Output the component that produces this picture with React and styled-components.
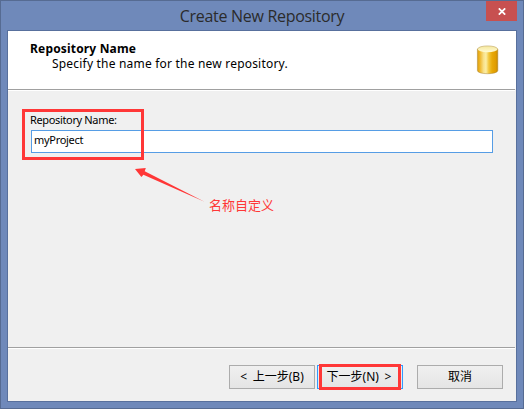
import React from 'react';
import styled, { createGlobalStyle } from 'styled-components';

const Global = createGlobalStyle`
  * { box-sizing: border-box; }
  body { margin: 0; overflow: hidden; }
`;

const Window = styled.div`
  position: relative;
  width: 524px;
  height: 409px;
  padding: 0 6px 6px;
  display: flex;
  flex-direction: column;
  background: #6f89ba;
  border: 1px solid #566b92;
  color: #000;
  font-family: 'Noto Sans', 'Noto Sans CJK SC', sans-serif;
`;

const TitleBar = styled.header`
  height: 29px;
  flex: none;
  display: grid;
  grid-template-columns: 31px 1fr 31px;
`;

const Title = styled.h1`
  grid-column: 2;
  margin: 0;
  padding-top: 1px;
  text-align: center;
  font: 400 16px/28px 'Open Sans', sans-serif;
  letter-spacing: -0.3px;
  color: #2b2b2b;
  white-space: nowrap;
`;

const CloseButton = styled.button`
  width: 31px;
  height: 20px;
  padding: 0;
  border: 0;
  background: #c75050;
  display: flex;
  align-items: center;
  justify-content: center;
`;

const Client = styled.main`
  flex: 1;
  display: flex;
  flex-direction: column;
  border: 1px solid #58709d;
  background: #f0f0f0;
`;

const Banner = styled.section`
  height: 58px;
  flex: none;
  padding: 10px 17px 0 22px;
  display: flex;
  justify-content: space-between;
  background: #fff;
`;

const BannerTitle = styled.h2`
  margin: 0;
  font-size: 12px;
  font-weight: 700;
  line-height: 15px;
  letter-spacing: 0.17px;
`;

const BannerText = styled.p`
  margin: 0 0 0 22px;
  font-size: 12px;
  line-height: 16px;
  letter-spacing: 0.2px;
`;

const Divider = styled.div`
  height: 2px;
  flex: none;
  margin-right: 1px;
  border-top: 1px solid #a0a0a0;
  background: #fff;
`;

const Form = styled.section`
  flex: 1;
  padding: 22px 23px 0 23px;
  display: flex;
  flex-direction: column;
`;

const Label = styled.label`
  margin-left: -1px;
  height: 17px;
  font-size: 11px;
  line-height: 14px;
  letter-spacing: -0.35px;
`;

const Field = styled.div`
  height: 23px;
  padding: 0 2px;
  border: 1px solid #569de5;
  background: #fff;
  font-size: 11px;
  line-height: 18px;
  letter-spacing: -0.3px;
`;

const Footer = styled.footer`
  height: 52px;
  flex: none;
  padding: 16px 13px 0 0;
  display: flex;
  justify-content: flex-end;
  gap: 2px;
`;

const Button = styled.button`
  width: 86px;
  height: 24px;
  padding: 0;
  margin-left: ${(p) => (p.$separate ? '12px' : '0')};
  border: 1px solid ${(p) => (p.$primary ? '#3399ff' : '#acacac')};
  background: linear-gradient(#f0f0f0, #e5e5e5);
  color: #000;
  font: 12px/22px 'Noto Sans', 'Noto Sans CJK SC', sans-serif;
  word-spacing: 2.5px;
  text-indent: ${(p) => (p.$primary ? '-2px' : '0')};
  white-space: nowrap;
`;

const Highlight = styled.div`
  position: absolute;
  left: ${(p) => p.$x - 1}px;
  top: ${(p) => p.$y - 1}px;
  width: ${(p) => p.$w}px;
  height: ${(p) => p.$h}px;
  border: 3px solid #ff3737;
`;

const Arrow = styled.svg`
  position: absolute;
  left: 133px;
  top: 165px;
`;

const Note = styled.div`
  position: absolute;
  left: 208px;
  top: 195px;
  color: #ff3737;
  font: 400 13px/18px 'Noto Sans CJK SC', sans-serif;
  white-space: nowrap;
`;

const IconSlot = styled.div`
  width: 23px;
  height: 30px;
  margin-top: 4px;
`;

function Cylinder() {
  return (
    <svg width="23" height="30" viewBox="0 0 23 30">
      <defs>
        <linearGradient id="body" x1="0" x2="1">
          <stop offset="0" stopColor="#dc9f08" />
          <stop offset="0.12" stopColor="#efb62a" />
          <stop offset="0.3" stopColor="#f8e088" />
          <stop offset="0.42" stopColor="#fbeea6" />
          <stop offset="0.56" stopColor="#f2c63c" />
          <stop offset="0.72" stopColor="#e8a908" />
          <stop offset="0.9" stopColor="#e09c00" />
          <stop offset="1" stopColor="#c48600" />
        </linearGradient>
        <linearGradient id="lid" x1="0" x2="0" y1="0" y2="1">
          <stop offset="0" stopColor="#f5e79c" />
          <stop offset="1" stopColor="#fffbd5" />
        </linearGradient>
      </defs>
      <path d="M1.4 4V25.5C1.4 29.8 21.8 29.8 21.8 25.5V4Z" fill="url(#body)" stroke="#a8863f" strokeWidth="0.5" />
      <ellipse cx="11.6" cy="4.1" rx="10" ry="3.2" fill="url(#lid)" />
      <path d="M1.6 4C2.5 -0.1 20.7 -0.1 21.6 4" fill="none" stroke="#c0a560" strokeWidth="0.6" />
    </svg>
  );
}

export default function App() {
  return (
    <>
      <Global />
      <Window>
        <TitleBar>
          <Title>Create New Repository</Title>
          <CloseButton aria-label="Close">
            <svg width="8" height="7" viewBox="0 0 8 7">
              <path d="M0.8 0.3L7.2 6.7M7.2 0.3L0.8 6.7" stroke="#fff" strokeWidth="1.7" />
            </svg>
          </CloseButton>
        </TitleBar>
        <Client>
          <Banner>
            <div>
              <BannerTitle>Repository Name</BannerTitle>
              <BannerText>Specify the name for the new repository.</BannerText>
            </div>
            <IconSlot><Cylinder /></IconSlot>
          </Banner>
          <Divider />
          <Form>
            <Label>Repository Name:</Label>
            <Field>myProject</Field>
          </Form>
          <Divider />
          <Footer>
            <Button>&lt; 上一步(B)</Button>
            <Button $primary>下一步(N) &gt;</Button>
            <Button $separate>取消</Button>
          </Footer>
        </Client>
        <Highlight $x={22} $y={109} $w={122} $h={51} />
        <Highlight $x={319} $y={364} $w={82} $h={26} />
        <Arrow width="74" height="40" viewBox="134 166 74 40">
          <path d="M135 169L145.8 168L144.7 171.2L204.5 201.8L143.4 174.7L141.4 177Z" fill="#ff3737" />
        </Arrow>
        <Note>名称自定义</Note>
      </Window>
    </>
  );
}
